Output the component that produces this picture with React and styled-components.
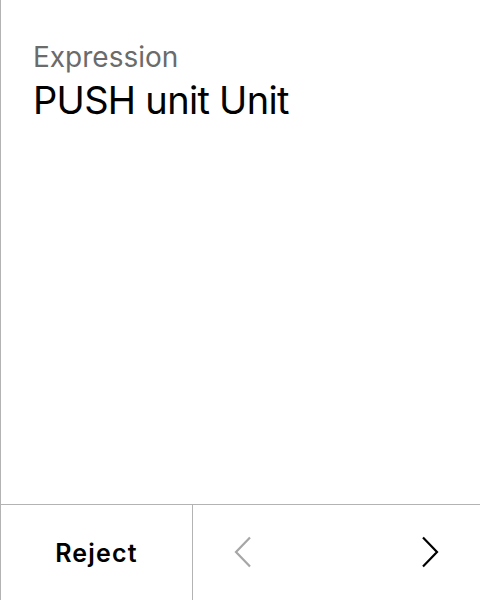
import React from "react";
import styled, { createGlobalStyle } from "styled-components";

const Global = createGlobalStyle`
  html, body {
    margin: 0;
    padding: 0;
    background: #ffffff;
  }
  body {
    font-family: Inter, "Noto Sans", sans-serif;
  }
`;

const Card = styled.div`
  width: 480px;
  height: 600px;
  box-sizing: border-box;
  border-left: 1px solid #b3b3b3;
  display: flex;
  flex-direction: column;
`;

const Body = styled.div`
  flex: 1;
  padding: 40px 32px 0;
`;

const Label = styled.div`
  font-size: 28px;
  line-height: 34px;
  color: #6b6b6b;
`;

const Value = styled.div`
  margin-top: 2px;
  font-size: 38px;
  line-height: 48px;
  letter-spacing: -0.7px;
  color: #000;
`;

const Footer = styled.div`
  height: 96px;
  box-sizing: border-box;
  border-top: 1px solid #b3b3b3;
  display: flex;
`;

const RejectButton = styled.button`
  width: 192px;
  border: none;
  border-right: 1px solid #b3b3b3;
  background: none;
  font-family: inherit;
  font-size: 25px;
  font-weight: 600;
  letter-spacing: 1.2px;
  color: #000;
  padding: 0;
`;

const Nav = styled.div`
  flex: 1;
  display: flex;
  justify-content: space-between;
  align-items: center;
  padding: 0 41px 2px 41px;
`;

const Arrow = styled.button`
  border: none;
  background: none;
  padding: 0;
  display: flex;
  color: ${(p) => (p.disabled ? "#a6a6a6" : "#000")};
`;

const Chevron = ({ dir }) => (
  <svg width="18" height="32" viewBox="0 0 18 32" fill="none">
    <path
      d={dir === "left" ? "M16 1.5 L2 16 L16 30.5" : "M2 1.5 L16 16 L2 30.5"}
      stroke="currentColor"
      strokeWidth="2.2"
    />
  </svg>
);

export default function App() {
  return (
    <>
      <Global />
      <Card>
        <Body>
          <Label>Expression</Label>
          <Value>PUSH unit Unit</Value>
        </Body>
        <Footer>
          <RejectButton>Reject</RejectButton>
          <Nav>
            <Arrow disabled>
              <Chevron dir="left" />
            </Arrow>
            <Arrow>
              <Chevron dir="right" />
            </Arrow>
          </Nav>
        </Footer>
      </Card>
    </>
  );
}
